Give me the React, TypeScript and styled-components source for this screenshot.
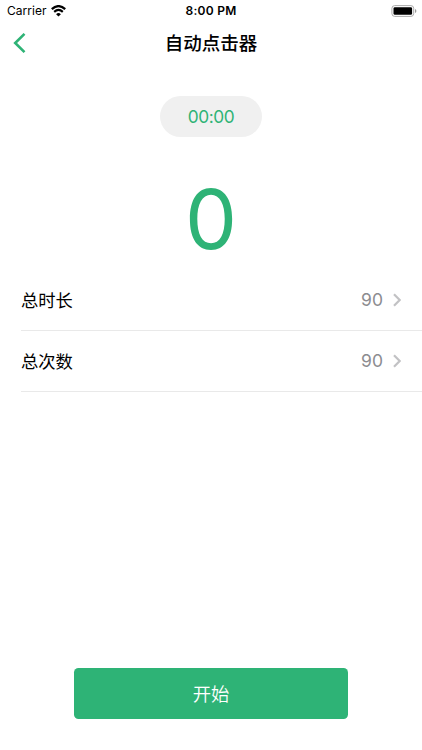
import React from "react";
import styled, { createGlobalStyle } from "styled-components";

const GlobalStyle = createGlobalStyle`
  * { box-sizing: border-box; }
  body {
    margin: 0;
    background: #fff;
    font-family: Inter, "Noto Sans CJK SC", sans-serif;
    color: #000;
  }
`;

const Screen = styled.div`
  display: flex;
  flex-direction: column;
  height: 750px;
  overflow: hidden;
  background: #fff;
`;

const StatusBar = styled.header`
  display: grid;
  grid-template-columns: 1fr auto 1fr;
  align-items: center;
  height: 22px;
  padding: 0 5px 0 7px;
  font-size: 12px;
`;

const Carrier = styled.div`
  display: flex;
  align-items: center;
  gap: 4px;
  padding-bottom: 1px;
  letter-spacing: 0.05px;
`;

const Clock = styled.div`
  padding: 0 2px 2px 0;
  font-size: 12px;
  font-weight: 600;
  letter-spacing: 0.28px;
`;

const Battery = styled.svg`
  justify-self: end;
`;

const NavBar = styled.nav`
  display: grid;
  grid-template-columns: 1fr auto 1fr;
  align-items: center;
  height: 42px;
  padding: 0 13px;
`;

const BackButton = styled.button`
  display: flex;
  justify-self: start;
  padding: 0;
  border: 0;
  background: none;
`;

const Title = styled.h1`
  margin: 0;
  font-size: 18.5px;
  line-height: 26px;
  font-weight: 500;
`;

const Timer = styled.div`
  align-self: center;
  width: 102px;
  height: 41px;
  margin-top: 32px;
  border-radius: 21px;
  background: #f0f0f0;
  color: #2eb376;
  font-size: 17.3px;
  line-height: 42px;
  text-align: center;
  letter-spacing: -0.4px;
`;

const Count = styled.div`
  height: 133px;
  color: #2eb376;
  font-size: 82.5px;
  line-height: 165px;
  text-align: center;
`;

const Settings = styled.ul`
  margin: 0;
  padding: 0 0 0 21px;
  list-style: none;
`;

const SettingRow = styled.li`
  display: flex;
  align-items: center;
  height: 61px;
  padding-right: 21px;
  border-bottom: 1.5px solid #e9e9e9;
`;

const Label = styled.span`
  flex: 1;
  padding-top: 2px;
  font-size: 17.3px;
  line-height: 26px;
`;

const Value = styled.span`
  margin-right: 10px;
  padding-bottom: 1px;
  color: #8c8c90;
  font-size: 17.5px;
`;

const StartButton = styled.button`
  align-self: center;
  width: 274px;
  height: 51px;
  margin: auto 0 31px;
  padding: 2px 0 0;
  border: 0;
  border-radius: 4.5px;
  background: #2eb376;
  color: #fff;
  font: 350 18.3px/49px Inter, "Noto Sans CJK SC", sans-serif;
`;

const settings = [
  { label: "总时长", value: 90 },
  { label: "总次数", value: 90 },
];

export default function App() {
  return (
    <>
      <GlobalStyle />
      <Screen>
        <StatusBar>
          <Carrier>
            Carrier
            <svg width="15" height="12" viewBox="0 0 15 12" fill="none" stroke="#000">
              <path d="M.8 4.2Q7.5-1.9 14.2 4.2" strokeWidth="2.3" />
              <path d="M3.2 6.9Q7.5 3 11.8 6.9" strokeWidth="2.1" />
              <path d="M5.1 9.2Q7.5 7 9.9 9.2L7.5 11.6Z" fill="#000" stroke="none" />
            </svg>
          </Carrier>
          <Clock>8:00 PM</Clock>
          <Battery width="26" height="12" viewBox="0 0 26 12">
            <rect x=".9" y=".6" width="21.8" height="10.8" rx="2.8" fill="#fff" stroke="#aaa" />
            <rect x="2.5" y="2.2" width="18.6" height="7.6" rx="1.4" />
            <path d="M24 4v4q1.4-.6 1.4-2T24 4Z" fill="#999" />
          </Battery>
        </StatusBar>
        <NavBar>
          <BackButton aria-label="返回">
            <svg width="13" height="20" viewBox="0 0 13 20" fill="none" stroke="#2eb376" strokeWidth="2.6">
              <path d="M11.5.9 2.2 10l9.3 9.1" />
            </svg>
          </BackButton>
          <Title>自动点击器</Title>
        </NavBar>
        <Timer>00:00</Timer>
        <Count>0</Count>
        <Settings>
          {settings.map(({ label, value }) => (
            <SettingRow key={label}>
              <Label>{label}</Label>
              <Value>{value}</Value>
              <svg width="8" height="14" viewBox="0 0 8 14" fill="none" stroke="#c2c2c4" strokeWidth="2.2">
                <path d="m1 1.3 5.7 5.7L1 12.7" />
              </svg>
            </SettingRow>
          ))}
        </Settings>
        <StartButton>开始</StartButton>
      </Screen>
    </>
  );
}
